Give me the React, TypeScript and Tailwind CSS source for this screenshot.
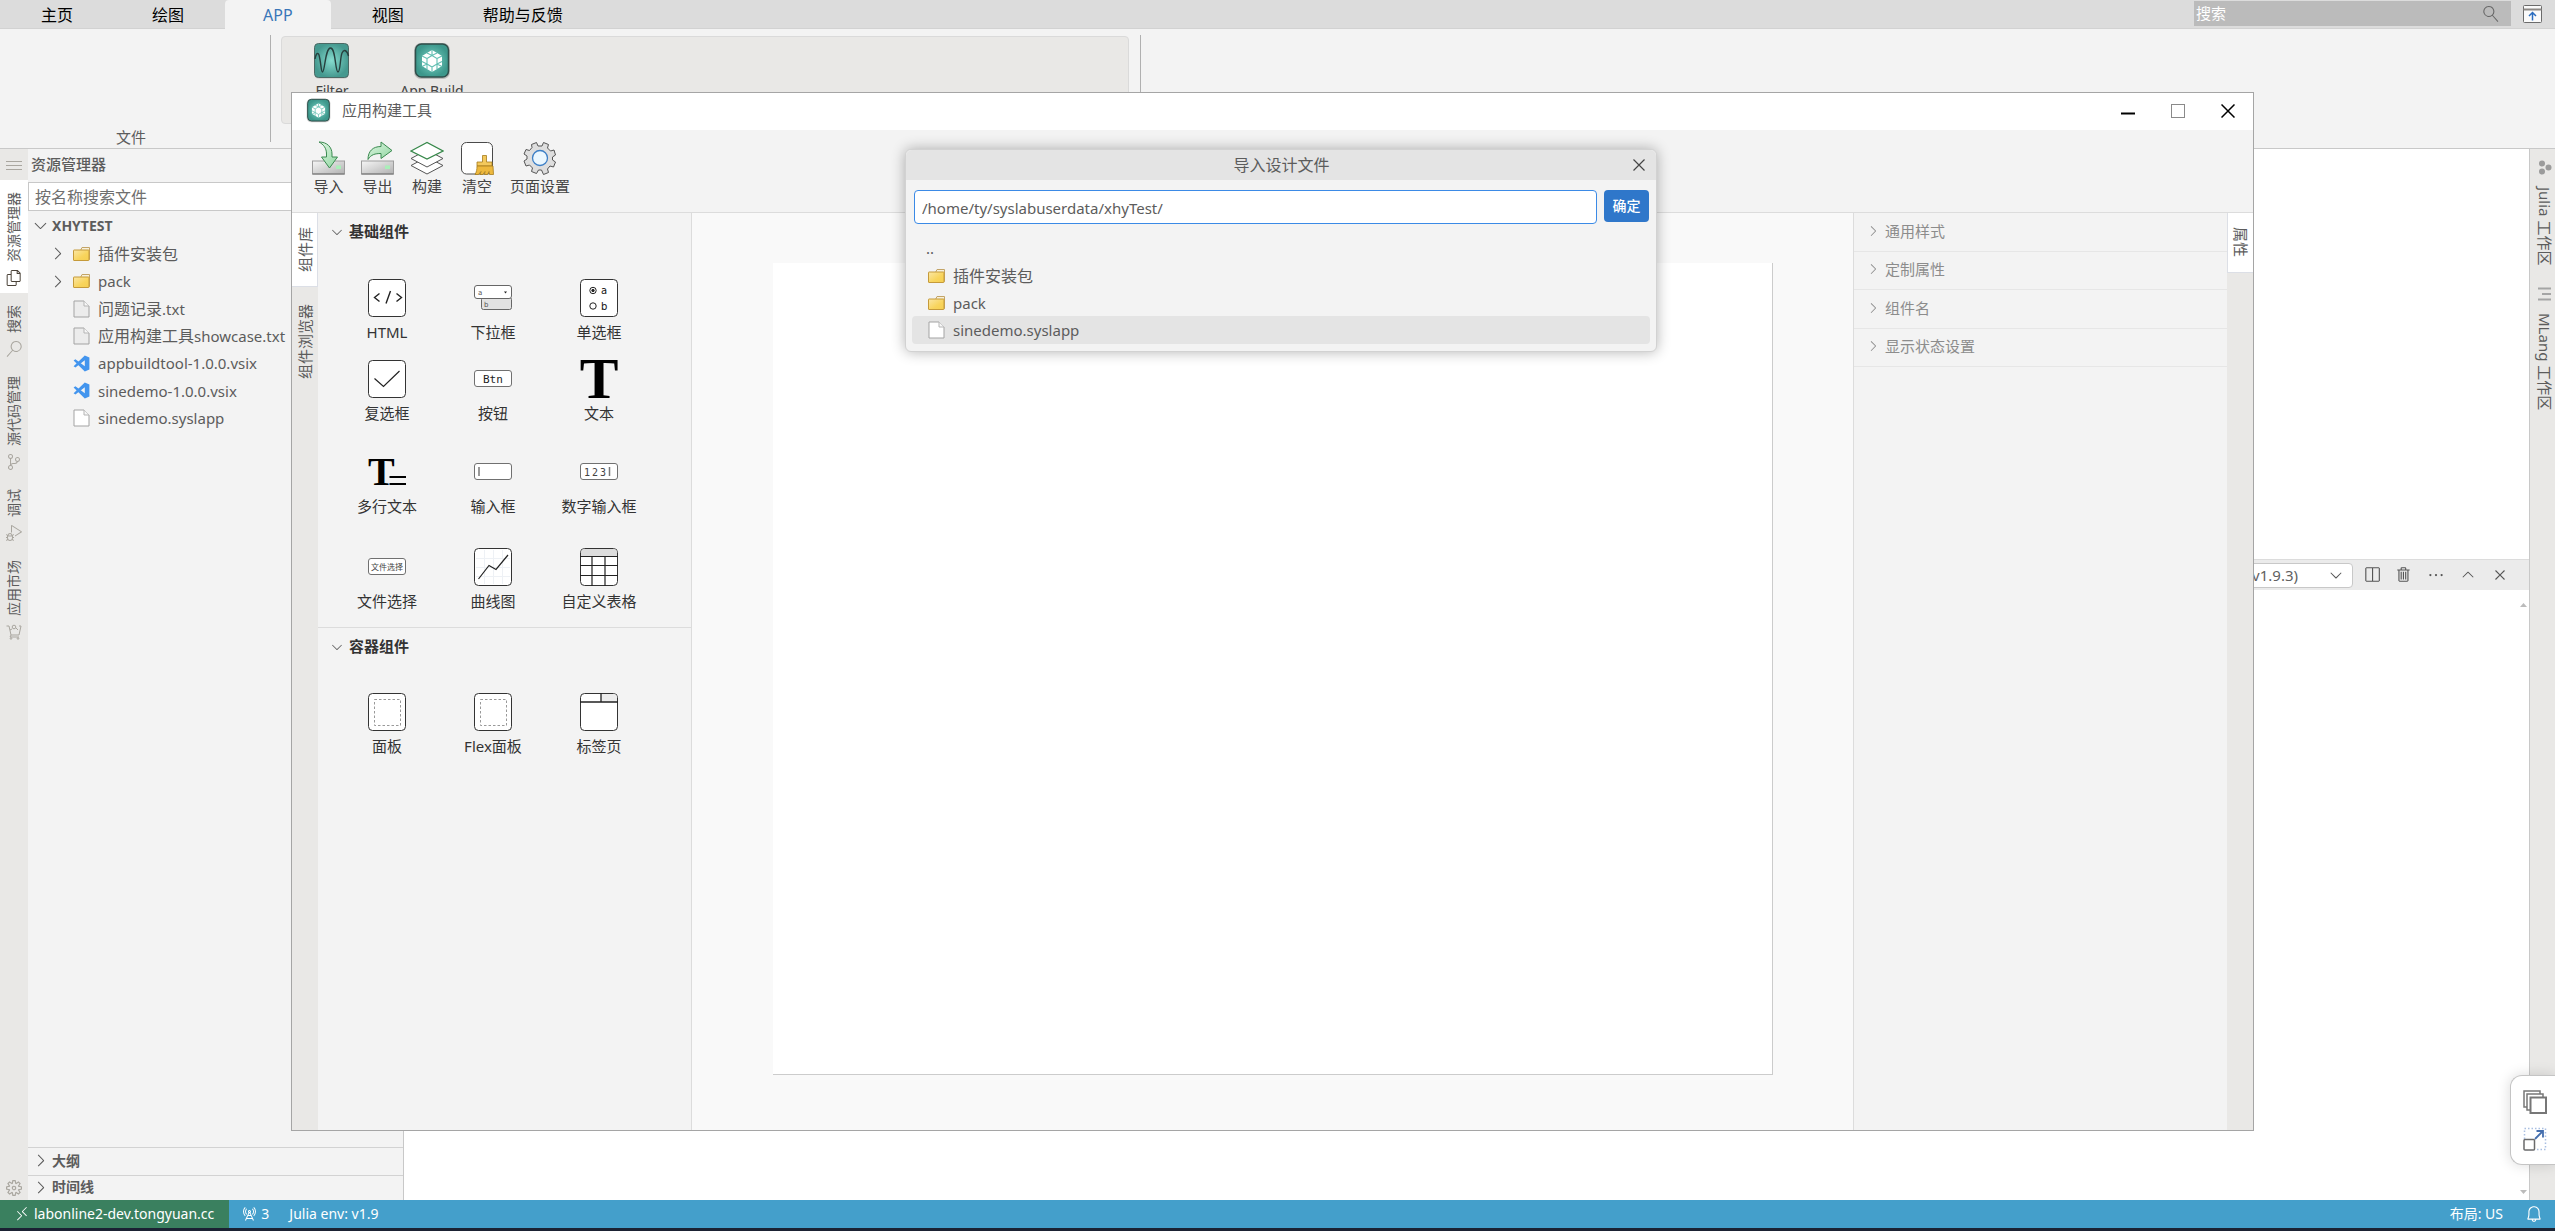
import { useState, type ReactNode } from 'react';
import { clsx } from 'clsx';
import {
    VscBell,
    VscChevronDown,
    VscChevronRight,
    VscChevronUp,
    VscClose,
    VscDebugAlt,
    VscEllipsis,
    VscFiles,
    VscMenu,
    VscRadioTower,
    VscRemote,
    VscSearch,
    VscSettingsGear,
    VscSourceControl,
    VscSplitHorizontal,
    VscTrash,
} from 'react-icons/vsc';

const MENU_TABS = ['主页', '绘图', 'APP', '视图', '帮助与反馈'];

type FileKind = 'folder' | 'text' | 'vsix' | 'blank';
type FileItem = { kind: FileKind; cjk?: string; latin?: string };

const FILES: FileItem[] = [
    { kind: 'folder', cjk: '插件安装包' },
    { kind: 'folder', latin: 'pack' },
    { kind: 'text', cjk: '问题记录', latin: '.txt' },
    { kind: 'text', cjk: '应用构建工具', latin: 'showcase.txt' },
    { kind: 'vsix', latin: 'appbuildtool-1.0.0.vsix' },
    { kind: 'vsix', latin: 'sinedemo-1.0.0.vsix' },
    { kind: 'blank', latin: 'sinedemo.syslapp' },
];

const DIALOG_FILES: FileItem[] = [
    { kind: 'folder', cjk: '插件安装包' },
    { kind: 'folder', latin: 'pack' },
    { kind: 'blank', latin: 'sinedemo.syslapp' },
];

const PROPERTY_GROUPS = ['通用样式', '定制属性', '组件名', '显示状态设置'];

/* ---------- icons ---------- */

function FolderIcon() {
    return (
        <svg width="17" height="16" viewBox="0 0 17 16" className="shrink-0">
            <defs>
                <linearGradient id="folder" x1="0" y1="0" x2="1" y2="1">
                    <stop offset="0" stopColor="#fbe7a6" />
                    <stop offset="0.6" stopColor="#f8d45c" />
                    <stop offset="1" stopColor="#f5cf52" />
                </linearGradient>
            </defs>
            <path d="M7.5 4.5 9 1.5h7.5v12H15" fill="#f7f1dd" stroke="#c3a467" />
            <rect x="0.5" y="4" width="15.5" height="10.5" rx="0.5" fill="url(#folder)" stroke="#c59a3a" />
        </svg>
    );
}

function PageIcon({ filled }: { filled?: boolean }) {
    return (
        <svg width="17" height="18" viewBox="0 0 17 18" className="shrink-0">
            <path d="M1 1h10l5 5v11H1z" fill={filled ? '#ececec' : '#fff'} stroke="#a3a3a3" />
            <path d="M11 1v5h5" fill="#f7f7f7" stroke="#b5b5b5" />
        </svg>
    );
}

function VsixIcon() {
    return (
        <svg width="17" height="17" viewBox="0 0 17 17" className="shrink-0" fill="#4395ee">
            <path d="M11.8.6 16.4 2.6v11.8l-4.6 2L.6 5.6l1.8-1.4 9.4 7.1V5.2L2.4 12.6.6 11.2z" />
        </svg>
    );
}

function FileIcon({ kind }: { kind: FileKind }) {
    if (kind === 'folder') return <FolderIcon />;
    if (kind === 'vsix') return <VsixIcon />;
    return <PageIcon filled={kind === 'text'} />;
}

function FileName({ item }: { item: FileItem }) {
    return (
        <span className="whitespace-nowrap text-base leading-5">
            {item.cjk}
            {item.latin && <span className="text-[15px]">{item.latin}</span>}
        </span>
    );
}

function FilterLogo() {
    return (
        <svg width="38" height="38" viewBox="0 0 38 38">
            <defs>
                <radialGradient id="filterBg">
                    <stop offset="0" stopColor="#86dccf" />
                    <stop offset="1" stopColor="#45998f" />
                </radialGradient>
            </defs>
            <rect x="1.5" y="2" width="34" height="34.5" rx="4" fill="#9a9a9a" opacity="0.5" />
            <rect x="1.5" y="1.5" width="34" height="34" rx="4" fill="url(#filterBg)" stroke="#4c6965" />
            <path
                d="M2 17C3 11 5 10 6 13c2 7 2 17 3.500 17C12 30 12 6 17.500 6S22 30 25 30c2.500 0 2-14 4-19 2-4 5-3 6.500 3"
                fill="none"
                stroke="#27403e"
                strokeWidth="1.4"
            />
        </svg>
    );
}

function BuildLogo({ size }: { size: number }) {
    return (
        <svg width={size} height={size} viewBox="0 0 38 38">
            <defs>
                <radialGradient id="buildBg">
                    <stop offset="0" stopColor="#7ad4c7" />
                    <stop offset="1" stopColor="#3c978b" />
                </radialGradient>
            </defs>
            <rect x="1" y="1" width="36" height="36" rx="7" fill="#777" opacity="0.4" />
            <rect x="2.500" y="2" width="33" height="33" rx="6" fill="url(#buildBg)" stroke="#2f4f4b" strokeWidth="1.500" />
            <path d="M19 8l5 3 5 3v10l-5 3-5 3-5-3-5-3V14l5-3z" fill="#fff" />
            <path
                d="M19 13.500l5 3v5.500l-5 3-5-3v-5.500zM19 8v5.500M24 16.500l5-2.500M24 22l5 2.500M19 25v5M14 22l-5 2.500M14 16.500l-5-2.500M14 11l5 2.500 5-2.500M9 19.500l5 2.500v5M29 19.500l-5 2.500v5"
                fill="none"
                stroke="#62bfb2"
                strokeWidth="1.100"
            />
        </svg>
    );
}

function DriveBase() {
    return (
        <>
            <defs>
                <linearGradient id="drive" x1="0" y1="0" x2="1" y2="1">
                    <stop offset="0" stopColor="#f6f6f6" />
                    <stop offset="1" stopColor="#b1b1b1" />
                </linearGradient>
                <linearGradient id="arrow" x1="0" y1="0" x2="1" y2="1">
                    <stop offset="0" stopColor="#e2f6e4" />
                    <stop offset="1" stopColor="#8ed6a0" />
                </linearGradient>
            </defs>
            <rect x="0.500" y="20" width="32" height="13" fill="url(#drive)" stroke="#9d9d9d" />
            <path d="M0.500 33h32" stroke="#6f6f6f" />
            <rect x="24" y="24.500" width="5" height="3.500" fill="#a9efb8" />
        </>
    );
}

function ImportIcon() {
    return (
        <svg width="33" height="34" viewBox="0 0 33 34">
            <DriveBase />
            <path d="M7 1c8 0 13 5 13 12v3h5.500L17.500 27 9.500 16h5v-3c0-6-3-9.500-7.500-12z" fill="url(#arrow)" stroke="#3b8a50" />
        </svg>
    );
}

function ExportIcon() {
    return (
        <svg width="33" height="34" viewBox="0 0 33 34">
            <DriveBase />
            <path d="M7 18.500C7 10 12 5.500 20 5.500V1l11 8.500-11 8v-5c-6 0-10 1-13 6z" fill="url(#arrow)" stroke="#3b8a50" />
        </svg>
    );
}

function LayersIcon() {
    return (
        <svg width="34" height="34" viewBox="0 0 34 34" fill="#fff">
            <path d="M1 24.500 17 16l16 8.500L17 33z" stroke="#555" />
            <path d="M1 17.500 17 9l16 8.500L17 26z" stroke="#555" />
            <path d="M1 10 17 1.500 33 10 17 18z" stroke="#37884a" strokeWidth="1.200" />
        </svg>
    );
}

function ClearIcon() {
    return (
        <svg width="34" height="34" viewBox="0 0 34 34">
            <rect x="1.500" y="1.500" width="31" height="31.500" rx="5" fill="#fff" stroke="#4a4a4a" />
            <path d="M22.500 14.500h4V21h5.500v4H17v-4h5.500z" fill="#f3c95d" stroke="#a67c1d" strokeWidth="0.800" />
            <path d="M17 25h16l.5 8.500h-4l-.5-3-1.500 3h-3l.5-3-2 3h-3l1-3-2.500 3H15c1.500-2.500 2-5 2-8.500z" fill="#edb83d" stroke="#a67c1d" strokeWidth="0.800" />
        </svg>
    );
}

function PageSettingsIcon() {
    return (
        <svg width="34" height="34" viewBox="0 0 34 34">
            <path
                d="M13.500 1.500 15 5h4l1.500-3.500 5 2L24.500 7l3 3 3.500-1 1.500 5-3 2v3l3 2-2 5-3.500-1-2.500 3 1 3.500-5 2L18.500 29h-3l-2 3.500-5-2 1-3.500-3-3-3.500 1-2-5 3-2v-3l-3-2 2-4.500 3.500 1L9 6.500l-.5-3z"
                fill="#dedede"
                stroke="#555"
                strokeLinejoin="round"
            />
            <circle cx="17" cy="17" r="7.500" fill="#eaf7ff" stroke="#3c7fc6" strokeWidth="1.300" />
        </svg>
    );
}

function CartIcon() {
    return (
        <svg width="16" height="16" viewBox="0 0 16 16" fill="none" stroke="currentColor">
            <path d="M0.500 2h2.500l2 9h8l2-9h-2M5 11l-1 2h9" />
            <circle cx="8" cy="3" r="1.800" />
            <path d="M4 6l2-1M10 4l2 2" />
            <circle cx="5" cy="14.500" r="0.800" />
            <circle cx="12" cy="14.500" r="0.800" />
        </svg>
    );
}

function Frame({ children }: { children?: ReactNode }) {
    return (
        <svg width="38" height="38" viewBox="0 0 38 38" fill="none" stroke="#222">
            <rect x="0.500" y="0.500" width="37" height="37" rx="4" fill="#fff" stroke="#333" />
            {children}
        </svg>
    );
}

function SmallFrame({ children }: { children?: ReactNode }) {
    return (
        <svg width="38" height="18" viewBox="0 0 38 18">
            <rect x="0.500" y="0.500" width="37" height="16" rx="2.500" fill="#fff" stroke="#707070" />
            {children}
        </svg>
    );
}

const BASIC_ICONS: Record<string, ReactNode> = {
    HTML: (
        <Frame>
            <path d="M11.500 14.500l-5 4 5 4M28.500 14.500l5 4-5 4M22.500 12l-4.500 12.500" strokeWidth="1.400" />
        </Frame>
    ),
    下拉框: (
        <svg width="38" height="26" viewBox="0 0 38 26" fontFamily="DejaVu Sans" fontSize="7">
            <rect x="7.500" y="12.500" width="30" height="12" rx="2" fill="#e2e2e2" stroke="#666" />
            <rect x="0.500" y="0.500" width="37" height="13" rx="2.500" fill="#fff" stroke="#666" />
            <path d="M30 6.500h3l-1.500 2z" fill="#222" />
            <text x="4" y="9.500" fill="#555">a</text>
            <text x="10" y="22" fill="#555">b</text>
        </svg>
    ),
    单选框: (
        <Frame>
            <circle cx="13" cy="11.500" r="3.200" />
            <circle cx="13" cy="11.500" r="1.200" fill="#222" />
            <circle cx="13" cy="27" r="3.200" />
            <g fill="#111" stroke="none" fontFamily="DejaVu Sans" fontSize="10">
                <text x="21" y="15">a</text>
                <text x="21" y="31">b</text>
            </g>
        </Frame>
    ),
    复选框: (
        <Frame>
            <path d="M6.500 18.500l9 8L31.500 11" strokeWidth="1.200" />
        </Frame>
    ),
    按钮: (
        <SmallFrame>
            <text x="9" y="13" fontFamily="DejaVu Sans Mono" fontSize="11" fill="#222">Btn</text>
        </SmallFrame>
    ),
    文本: (
        <svg width="38" height="40" viewBox="0 0 38 40" className="overflow-visible">
            <text x="19" y="39" textAnchor="middle" fontFamily="Liberation Serif" fontWeight="700" fontSize="58">T</text>
        </svg>
    ),
    多行文本: (
        <svg width="38" height="28" viewBox="0 0 38 28" className="overflow-visible">
            <text x="0" y="27" fontFamily="Liberation Serif" fontWeight="700" fontSize="40">T</text>
            <path d="M21.500 19H38M21.500 26H38" stroke="#000" strokeWidth="2" />
        </svg>
    ),
    输入框: (
        <SmallFrame>
            <path d="M5 4v9" stroke="#777" strokeWidth="1.500" />
        </SmallFrame>
    ),
    数字输入框: (
        <SmallFrame>
            <text x="4" y="12.500" fontFamily="DejaVu Sans Mono" fontSize="10" fill="#444">1</text>
            <text x="12" y="12.500" fontFamily="DejaVu Sans Mono" fontSize="10" fill="#444">2</text>
            <text x="20" y="12.500" fontFamily="DejaVu Sans Mono" fontSize="10" fill="#444">3</text>
            <path d="M29.500 4v9" stroke="#777" strokeWidth="1.500" />
        </SmallFrame>
    ),
    文件选择: (
        <SmallFrame>
            <text x="19" y="12" textAnchor="middle" fontFamily="Noto Sans CJK SC" fontSize="8" fill="#444">文件选择</text>
        </SmallFrame>
    ),
    曲线图: (
        <Frame>
            <path d="M10.500 2v34M19.500 2v34M28.500 2v34M2 10.500h34M2 19.500h34M2 28.500h34" stroke="#eef1f5" />
            <path d="M4.500 31 15 17.500l7 4L34 7" strokeWidth="1.200" />
        </Frame>
    ),
    自定义表格: (
        <Frame>
            <path d="M1 8V4.500Q1 1 4.500 1h29Q37 1 37 4.500V8z" fill="#ddd" stroke="none" />
            <path d="M0 8.500h38M0 17.500h38M0 27.500h38M12 8.500V38M25 8.500V38" strokeWidth="1.200" />
        </Frame>
    ),
};

const dashedFrame = (
    <Frame>
        <rect x="6.500" y="6.500" width="26" height="26" stroke="#999" strokeDasharray="2.500 2" />
    </Frame>
);

const CONTAINER_ICONS: Record<string, ReactNode> = {
    面板: dashedFrame,
    Flex面板: dashedFrame,
    标签页: (
        <Frame>
            <path d="M21 1h12.500Q37 1 37 4.500V9H21z" fill="#ececec" stroke="none" />
            <path d="M0 9h38M21 0v9" strokeWidth="1.300" />
        </Frame>
    ),
};

/* ---------- shell ---------- */

function MenuBar() {
    const [active, setActive] = useState('APP');

    return (
        <header className="flex h-[29px] shrink-0 border-b border-[#d2d2d2] bg-[#dcdcdc]">
            <nav className="flex flex-1 gap-[3px] pl-[3px]">
                {MENU_TABS.map((tab) => (
                    <button
                        key={tab}
                        onClick={() => setActive(tab)}
                        className={clsx(
                            'h-[29px] px-[38px] text-base leading-5',
                            active === tab ? 'rounded-t bg-[#f3f3f3] text-[#3a76b8]' : 'text-black',
                        )}
                    >
                        {tab}
                    </button>
                ))}
            </nav>
            <div className="flex items-start gap-3 pr-[13px] pt-px">
                <label className="flex h-[25px] w-[317px] items-center bg-[#bbb] pl-0.5 pr-3">
                    <input
                        aria-label="搜索"
                        placeholder="搜索"
                        className="min-w-0 flex-1 bg-transparent text-[15px] outline-none placeholder:text-white"
                    />
                    <VscSearch className="size-4 -scale-x-100 text-[#666]" />
                </label>
                <button aria-label="收起" className="pt-1">
                    <svg width="19" height="19" viewBox="0 0 19 19" fill="none">
                        <rect x="0.500" y="0.500" width="18" height="17" rx="1" fill="#fafafa" stroke="#6b6b6b" />
                        <path d="M0.500 4.500h18" stroke="#8c8885" strokeWidth="2" />
                        <path d="M9.500 15.500V8M6 11l3.500-3.500L13 11" stroke="#2a6cbf" strokeWidth="1.500" />
                    </svg>
                </button>
            </div>
        </header>
    );
}

function Ribbon() {
    return (
        <div className="flex h-[120px] shrink-0 border-b border-[#c8c8c8] bg-[#f3f3f3] pt-1.5 text-[#5c5c5c]">
            <div className="flex h-[107px] w-[271px] items-end justify-center border-r border-[#b0b0b0] text-[15px] leading-5">
                <span className="-mb-[5px] pr-2">文件</span>
            </div>
            <div className="ml-2.5 mt-px flex h-[88px] w-[848px] rounded border border-[#dadada] bg-[#e9e8e6] pt-[5px]">
                {[
                    { name: 'Filter', logo: <FilterLogo /> },
                    { name: 'App Build', logo: <BuildLogo size={38} /> },
                ].map(({ name, logo }) => (
                    <button key={name} className="flex w-[100px] flex-col items-center gap-px text-sm text-[#444]">
                        {logo}
                        {name}
                    </button>
                ))}
            </div>
            <div className="ml-[11px] h-[107px] border-l border-[#b0b0b0]" />
        </div>
    );
}

function ActivityBar() {
    const items = [
        { name: '资源管理器', icon: <VscFiles className="size-4" /> },
        { name: '搜索', icon: <VscSearch className="size-4" /> },
        { name: '源代码管理', icon: <VscSourceControl className="size-4" /> },
        { name: '调试', icon: <VscDebugAlt className="size-4" /> },
        { name: '应用市场', icon: <CartIcon /> },
    ];

    return (
        <nav className="flex w-7 shrink-0 flex-col items-center bg-[#e9e8e6] text-[#a9a69f]">
            <button aria-label="菜单" className="flex h-[31px] items-center">
                <VscMenu className="size-4" />
            </button>
            {items.map(({ name, icon }, i) => (
                <button
                    key={name}
                    className={clsx(
                        'flex w-full flex-col items-center gap-2 pb-[7px] pt-3',
                        i === 0 && 'bg-white text-[#4a4238]',
                    )}
                >
                    <span className="rotate-180 text-sm leading-5 text-[#5c5c5c] [text-orientation:sideways] [writing-mode:vertical-rl]">
                        {name}
                    </span>
                    {icon}
                </button>
            ))}
            <button aria-label="设置" className="mt-auto pb-1">
                <VscSettingsGear className="size-4" />
            </button>
        </nav>
    );
}

function Explorer() {
    return (
        <aside className="flex w-[376px] shrink-0 flex-col border-r border-[#c8c8c8] bg-[#f3f3f3] text-[#5c5c5c]">
            <h2 className="flex h-[33px] items-center pb-0.5 pl-[3px] text-[15px] font-medium">资源管理器</h2>
            <input
                aria-label="按名称搜索文件"
                placeholder="按名称搜索文件"
                className="h-[29px] border border-[#c8c8c8] bg-white px-1.5 text-base outline-none placeholder:text-[#6f6f6f]"
            />
            <button className="flex h-[29px] items-center gap-0.5 pl-[3px] text-sm font-bold">
                <VscChevronDown className="size-[19px]" />
                XHYTEST
            </button>
            <ul className="flex h-[192px] flex-col">
                {FILES.map((item) => (
                    <li key={(item.cjk ?? '') + (item.latin ?? '')} className="flex flex-1 items-center gap-2 pl-5">
                        <span className="w-[17px]">{item.kind === 'folder' && <VscChevronRight className="size-[19px]" />}</span>
                        <FileIcon kind={item.kind} />
                        <FileName item={item} />
                    </li>
                ))}
            </ul>
            <div className="mt-auto">
                {['大纲', '时间线'].map((name) => (
                    <button
                        key={name}
                        className="flex h-7 w-full items-center gap-0.5 border-t border-[#d2d2d2] pb-0.5 pl-[3px] text-sm font-bold last:h-[25px]"
                    >
                        <VscChevronRight className="size-[19px]" />
                        {name}
                    </button>
                ))}
            </div>
        </aside>
    );
}

function Workbench() {
    return (
        <main className="flex min-w-0 flex-1 flex-col bg-white">
            <div className="h-[411px] shrink-0 border-b border-[#dcdcdc]" />
            <div className="flex h-[30px] shrink-0 items-center justify-end gap-[14px] bg-[#ebebeb] pr-5 text-[#555]">
                <div className="flex items-center">
                    <select
                        aria-label="终端"
                        className="h-[25px] w-[220px] appearance-none rounded-sm border border-[#c8c8c8] bg-white pr-[54px] text-[15px] leading-5 text-[#616161] [text-align-last:right]"
                    >
                        <option>Julia (v1.9.3)</option>
                    </select>
                    <VscChevronDown className="pointer-events-none -ml-[26px] mr-2 size-[18px]" />
                </div>
                <button aria-label="拆分终端" className="-ml-1"><VscSplitHorizontal className="size-[18px]" /></button>
                <button aria-label="终止终端"><VscTrash className="size-[18px]" /></button>
                <button aria-label="更多"><VscEllipsis className="size-[18px]" /></button>
                <button aria-label="最大化面板"><VscChevronUp className="size-[18px]" /></button>
                <button aria-label="关闭面板"><VscClose className="size-[18px]" /></button>
            </div>
            <div className="flex flex-1 flex-col items-end justify-between py-[13px] pr-0.5">
                <svg width="7" height="5" viewBox="0 0 7 5"><path d="M0 4 3.500 0 7 4z" fill="#bbb" /></svg>
                <svg width="7" height="5" viewBox="0 0 7 5" className="-mb-2"><path d="M0 0 3.500 4 7 0z" fill="#bbb" /></svg>
            </div>
        </main>
    );
}

function WorkspaceBar() {
    return (
        <nav className="flex w-[26px] shrink-0 flex-col items-center gap-[22px] border-l border-[#c8c8c8] bg-[#e9e8e6] pl-1 pt-[11px] text-[15px] leading-5 text-[#5c5c5c]">
            <button className="flex flex-col items-center gap-3">
                <svg width="14" height="15" viewBox="0 0 14 15" fill="#9b9b9b">
                    <circle cx="4" cy="3.500" r="3" />
                    <circle cx="4" cy="11.500" r="3" />
                    <circle cx="10.500" cy="7.500" r="3" />
                </svg>
                <span className="[text-orientation:sideways] [writing-mode:vertical-rl]">Julia 工作区</span>
            </button>
            <button className="flex flex-col items-center gap-3">
                <svg width="14" height="14" viewBox="0 0 14 14" stroke="#a5a5a5" strokeWidth="2">
                    <path d="M0 1.500h13M4 7h9M0 12.500h13" />
                </svg>
                <span className="[text-orientation:sideways] [writing-mode:vertical-rl]">MLang 工作区</span>
            </button>
        </nav>
    );
}

function StatusBar() {
    return (
        <footer className="flex h-[31px] shrink-0 border-b-[3px] border-[#1b2233] bg-[#449fcb] text-sm text-white">
            <button className="flex items-center gap-1 bg-[#3a805f] pl-3.5 pr-[15px]">
                <VscRemote className="size-4" />
                labonline2-dev.tongyuan.cc
            </button>
            <button className="ml-3 flex items-center gap-1">
                <VscRadioTower className="size-4" />3
            </button>
            <button className="ml-5">Julia env: v1.9</button>
            <button className="ml-auto">布局: US</button>
            <button aria-label="通知" className="ml-[22px] mr-3">
                <VscBell className="size-[18px]" />
            </button>
        </footer>
    );
}

/* ---------- app build window ---------- */

function ComponentGrid({ icons, className }: { icons: Record<string, ReactNode>; className: string }) {
    return (
        <div className={clsx('grid w-[318px] grid-cols-3 text-[15px] leading-5 text-[#333]', className)}>
            {Object.entries(icons).map(([name, icon]) => (
                <button key={name} className="flex flex-col items-center justify-end gap-1">
                    <span className="flex h-10 items-center">{icon}</span>
                    {name}
                </button>
            ))}
        </div>
    );
}

function LibraryTabs() {
    return (
        <div className="flex w-[26px] shrink-0 flex-col bg-[#e9e8e6] text-[15px] leading-5 text-[#5c5c5c]">
            <button className="flex h-[74px] items-center justify-center border-b border-r border-[#dcdfe6] bg-white">
                <span className="rotate-180 [text-orientation:sideways] [writing-mode:vertical-rl]">组件库</span>
            </button>
            <button className="flex h-[110px] items-center justify-center">
                <span className="rotate-180 [text-orientation:sideways] [writing-mode:vertical-rl]">组件浏览器</span>
            </button>
        </div>
    );
}

function SectionHeader({ title }: { title: string }) {
    return (
        <h3 className="flex h-[37px] items-center gap-1 pl-[11px] text-[15px] font-bold text-[#333]">
            <VscChevronDown className="size-4 text-[#666]" />
            {title}
        </h3>
    );
}

function AppBuildWindow() {
    const tools = [
        { name: '导入', icon: <ImportIcon /> },
        { name: '导出', icon: <ExportIcon /> },
        { name: '构建', icon: <LayersIcon /> },
        { name: '清空', icon: <ClearIcon /> },
        { name: '页面设置', icon: <PageSettingsIcon /> },
    ];

    return (
        <section className="absolute bottom-[100px] left-[291px] right-[301px] top-[92px] flex flex-col border border-[#a5a5a5] bg-[#f3f3f3]">
            <div className="flex h-[37px] shrink-0 items-center bg-white pb-0.5 pl-3.5 text-[15px] text-[#5c5c5c]">
                <BuildLogo size={25} />
                <h1 className="flex-1 pl-[11px]">应用构建工具</h1>
                <div className="flex items-center gap-9 pr-[18px] text-black">
                    <button aria-label="最小化">
                        <svg width="14" height="14" viewBox="0 0 14 14"><path d="M0 9.500h14" stroke="currentColor" strokeWidth="2" /></svg>
                    </button>
                    <button aria-label="最大化">
                        <svg width="14" height="14" viewBox="0 0 14 14"><rect x="0.500" y="0.500" width="13" height="13" fill="none" stroke="#8a8a8a" /></svg>
                    </button>
                    <button aria-label="关闭">
                        <svg width="14" height="14" viewBox="0 0 14 14"><path d="M0.500.5l13 13M13.500.5l-13 13" stroke="currentColor" strokeWidth="1.500" /></svg>
                    </button>
                </div>
            </div>

            <div className="flex h-[83px] shrink-0 items-start gap-4 border-b border-[#dcdcdc] pl-5 pt-[11px] text-[15px] leading-5 text-[#444]">
                {tools.map(({ name, icon }) => (
                    <button key={name} className="flex min-w-[33px] flex-col items-center gap-px">
                        {icon}
                        {name}
                    </button>
                ))}
            </div>

            <div className="flex min-h-0 flex-1">
                <LibraryTabs />
                <div className="w-[374px] shrink-0 border-r border-[#dcdcdc]">
                    <div className="h-[415px] border-b border-[#dcdcdc]">
                        <SectionHeader title="基础组件" />
                        <ComponentGrid icons={BASIC_ICONS} className="ml-4 h-[361px] grid-rows-[92px_81px_93px_95px]" />
                    </div>
                    <SectionHeader title="容器组件" />
                    <ComponentGrid icons={CONTAINER_ICONS} className="ml-4 h-[91px]" />
                </div>

                <div className="min-w-0 flex-1 bg-[#f9f9f9] pb-[55px] pl-[81px] pr-20 pt-[50px]">
                    <div className="h-full border-b border-r border-[#ccc] bg-white" />
                </div>

                <div className="w-[374px] shrink-0 border-l border-[#dcdcdc]">
                    <div className="flex h-[154px] flex-col">
                        {PROPERTY_GROUPS.map((group) => (
                            <button
                                key={group}
                                className="flex flex-1 items-center gap-1 border-b border-[#e6e6e6] pb-0.5 pl-[11px] text-[15px] leading-5 text-[#8c8c8c]"
                            >
                                <VscChevronRight className="size-4" />
                                {group}
                            </button>
                        ))}
                    </div>
                </div>
                <div className="w-[26px] shrink-0 bg-[#e9e8e6] text-[15px] leading-5 text-[#5c5c5c]">
                    <button className="flex h-[60px] w-full items-center justify-center border-b border-l border-[#dcdfe6] bg-white">
                        <span className="[text-orientation:sideways] [writing-mode:vertical-rl]">属性</span>
                    </button>
                </div>
            </div>
        </section>
    );
}

function ImportDialog() {
    const [path, setPath] = useState('/home/ty/syslabuserdata/xhyTest/');

    return (
        <section
            role="dialog"
            aria-label="导入设计文件"
            className="absolute left-[905px] top-[149px] w-[752px] rounded-md border border-[#d2d2d2] bg-[#f3f3f3] text-[#5c5c5c] shadow-[0_0_14px_rgba(0,0,0,0.3)]"
        >
            <div className="flex h-[30px] items-center rounded-t-md bg-[#e4e4e4] pl-6 pr-[11px]">
                <h2 className="flex-1 text-center text-base leading-5">导入设计文件</h2>
                <button aria-label="关闭">
                    <svg width="12" height="12" viewBox="0 0 12 12"><path d="M0.500.5l11 11M11.500.5l-11 11" stroke="#444" strokeWidth="1.200" /></svg>
                </button>
            </div>
            <div className="flex gap-[7px] px-[7px] pl-2 pt-[10px]">
                <input
                    aria-label="路径"
                    value={path}
                    onChange={(e) => setPath(e.target.value)}
                    className="h-[34px] min-w-0 flex-1 rounded-sm border border-[#3b8ae6] bg-white px-[7px] pt-0.5 text-[15px] outline-none"
                />
                <button className="h-8 w-[45px] rounded-sm bg-[#2f77ca] text-sm font-medium text-white">确定</button>
            </div>
            <ul className="flex flex-col px-1.5 pb-[7px] pt-[11px]">
                <li className="flex h-[27px] items-center pl-3.5 text-[15px]">..</li>
                {DIALOG_FILES.map((item) => (
                    <li
                        key={(item.cjk ?? '') + (item.latin ?? '')}
                        className="flex h-[27px] items-center gap-2 rounded pl-4 last:h-7 last:bg-[#e4e4e4]"
                    >
                        <FileIcon kind={item.kind} />
                        <FileName item={item} />
                    </li>
                ))}
            </ul>
        </section>
    );
}

function FloatingTools() {
    return (
        <div className="absolute bottom-[66px] right-0 flex h-[90px] w-[45px] flex-col items-center justify-center gap-3 rounded-l-xl border border-r-0 border-[#c4c4c4] bg-white pl-1 shadow-[0_0_14px_rgba(0,0,0,0.15)]">
            <button aria-label="窗口列表">
                <svg width="24" height="25" viewBox="0 0 24 25" fill="#fff" stroke="#777" strokeWidth="1.500">
                    <rect x="1" y="1" width="16" height="16" />
                    <rect x="4" y="4" width="16" height="16" />
                    <rect x="7.500" y="7.500" width="15.500" height="15.500" strokeWidth="2" />
                </svg>
            </button>
            <button aria-label="展开">
                <svg width="24" height="24" viewBox="0 0 24 24" fill="none">
                    <rect x="1.500" y="1.500" width="21" height="21" stroke="#a9bfe2" strokeWidth="1.500" strokeDasharray="1.500 2" />
                    <rect x="1" y="12.500" width="10.500" height="10.500" rx="1" fill="#fff" stroke="#6b6b6b" strokeWidth="1.500" />
                    <path d="M12 12l7.500-7.500M13.500 4h6.500v6.500" stroke="#456fae" strokeWidth="1.800" />
                </svg>
            </button>
        </div>
    );
}

export default function App() {
    return (
        <div className="relative flex h-screen flex-col overflow-hidden font-['Noto_Sans','Noto_Sans_CJK_SC',sans-serif]">
            <MenuBar />
            <Ribbon />
            <div className="flex min-h-0 flex-1">
                <ActivityBar />
                <Explorer />
                <Workbench />
                <WorkspaceBar />
            </div>
            <StatusBar />

            <AppBuildWindow />
            <ImportDialog />
            <FloatingTools />
        </div>
    );
}
